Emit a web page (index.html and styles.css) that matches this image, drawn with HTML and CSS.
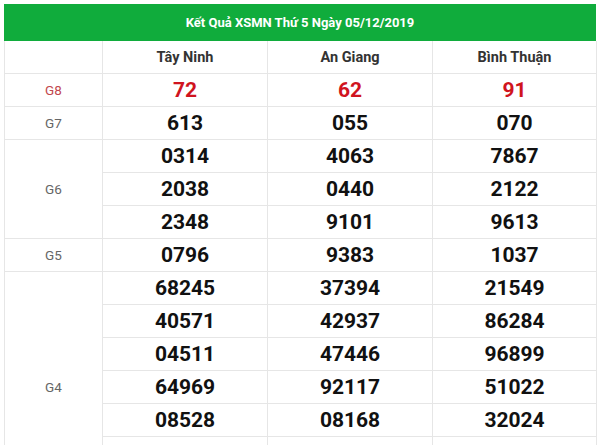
FILE: index.html
```html
<!DOCTYPE html>
<html lang="vi">
<head>
<meta charset="utf-8">
<title>Kết Quả XSMN</title>
<link rel="stylesheet" href="styles.css">
</head>
<body>
<div class="board">
  <div class="title">Kết Quả XSMN Thứ 5 Ngày 05/12/2019</div>
  <div class="grid">
    <div class="cell head"></div>
    <div class="cell head">Tây Ninh</div>
    <div class="cell head">An Giang</div>
    <div class="cell head">Bình Thuận</div>

    <div class="cell label red">G8</div>
    <div class="cell num red">72</div>
    <div class="cell num red">62</div>
    <div class="cell num red">91</div>

    <div class="cell label">G7</div>
    <div class="cell num">613</div>
    <div class="cell num">055</div>
    <div class="cell num">070</div>

    <div class="cell label span3">G6</div>
    <div class="cell num">0314</div>
    <div class="cell num">4063</div>
    <div class="cell num">7867</div>
    <div class="cell num">2038</div>
    <div class="cell num">0440</div>
    <div class="cell num">2122</div>
    <div class="cell num">2348</div>
    <div class="cell num">9101</div>
    <div class="cell num">9613</div>

    <div class="cell label">G5</div>
    <div class="cell num">0796</div>
    <div class="cell num">9383</div>
    <div class="cell num">1037</div>

    <div class="cell label span7">G4</div>
    <div class="cell num">68245</div>
    <div class="cell num">37394</div>
    <div class="cell num">21549</div>
    <div class="cell num">40571</div>
    <div class="cell num">42937</div>
    <div class="cell num">86284</div>
    <div class="cell num">04511</div>
    <div class="cell num">47446</div>
    <div class="cell num">96899</div>
    <div class="cell num">64969</div>
    <div class="cell num">92117</div>
    <div class="cell num">51022</div>
    <div class="cell num">08528</div>
    <div class="cell num">08168</div>
    <div class="cell num">32024</div>
    <div class="cell num"></div>
    <div class="cell num"></div>
    <div class="cell num"></div>
    <div class="cell num"></div>
    <div class="cell num"></div>
    <div class="cell num"></div>
  </div>
</div>
</body>
</html>
```
FILE: styles.css
```css
html, body {
  margin: 0;
  padding: 0;
  background: #ffffff;
  overflow: hidden;
}
body {
  font-family: Roboto, "Liberation Sans", Arial, sans-serif;
  width: 600px;
  height: 445px;
}
.board {
  margin: 4px 0 0 4px;
  width: 592px;
}
.title {
  height: 37px;
  background: #10ac3c;
  color: #ffffff;
  font-weight: bold;
  font-size: 13px;
  display: flex;
  align-items: center;
  justify-content: center;
}
.grid {
  display: grid;
  grid-template-columns: 98px 165px 165px 164px;
  grid-auto-rows: 33px;
  border-left: 1px solid #e6e6e6;
}
.cell {
  box-sizing: border-box;
  border-right: 1px solid #e6e6e6;
  border-bottom: 1px solid #e6e6e6;
  display: flex;
  align-items: center;
  justify-content: center;
  color: #111111;
}
.head {
  font-weight: bold;
  font-size: 14.5px;
  color: #333333;
}
.label {
  font-size: 13.5px;
  color: #666666;
}
.label.red {
  color: #c2474e;
}
.num {
  font-weight: bold;
  font-size: 21px;
}
.num.red {
  color: #d0141e;
}
.span3 {
  grid-row: span 3;
}
.span7 {
  grid-row: span 7;
}
```
